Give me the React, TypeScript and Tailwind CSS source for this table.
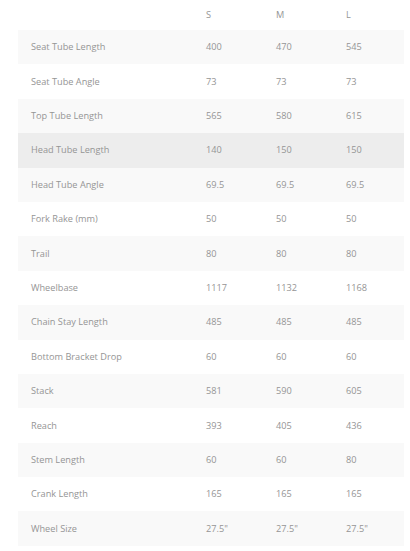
const rows: [string, string, string, string][] = [
  ["Seat Tube Length", "400", "470", "545"],
  ["Seat Tube Angle", "73", "73", "73"],
  ["Top Tube Length", "565", "580", "615"],
  ["Head Tube Length", "140", "150", "150"],
  ["Head Tube Angle", "69.5", "69.5", "69.5"],
  ["Fork Rake (mm)", "50", "50", "50"],
  ["Trail", "80", "80", "80"],
  ["Wheelbase", "1117", "1132", "1168"],
  ["Chain Stay Length", "485", "485", "485"],
  ["Bottom Bracket Drop", "60", "60", "60"],
  ["Stack", "581", "590", "605"],
  ["Reach", "393", "405", "436"],
  ["Stem Length", "60", "60", "80"],
  ["Crank Length", "165", "165", "165"],
  ["Wheel Size", "27.5\"", "27.5\"", "27.5\""],
]

export default function App() {
  return (
    <div className="h-[551px] w-[410px] bg-white pl-[18px] pr-[6px] font-['Open_Sans',sans-serif] text-[9.2px] text-[#959595]">
      <div className="grid h-[30px] grid-cols-[175px_70px_70px_1fr] items-center pl-[13px]">
        <span />
        <span>S</span>
        <span>M</span>
        <span>L</span>
      </div>
      {rows.map((r, i) => (
        <div
          key={r[0]}
          className={`grid h-[34.4px] grid-cols-[175px_70px_70px_1fr] items-center pl-[13px] ${
            i === 3 ? "bg-[#ededed]" : i % 2 === 0 ? "bg-[#f9f9f9]" : "bg-white"
          }`}
        >
          <span>{r[0]}</span>
          <span>{r[1]}</span>
          <span>{r[2]}</span>
          <span>{r[3]}</span>
        </div>
      ))}
    </div>
  )
}
